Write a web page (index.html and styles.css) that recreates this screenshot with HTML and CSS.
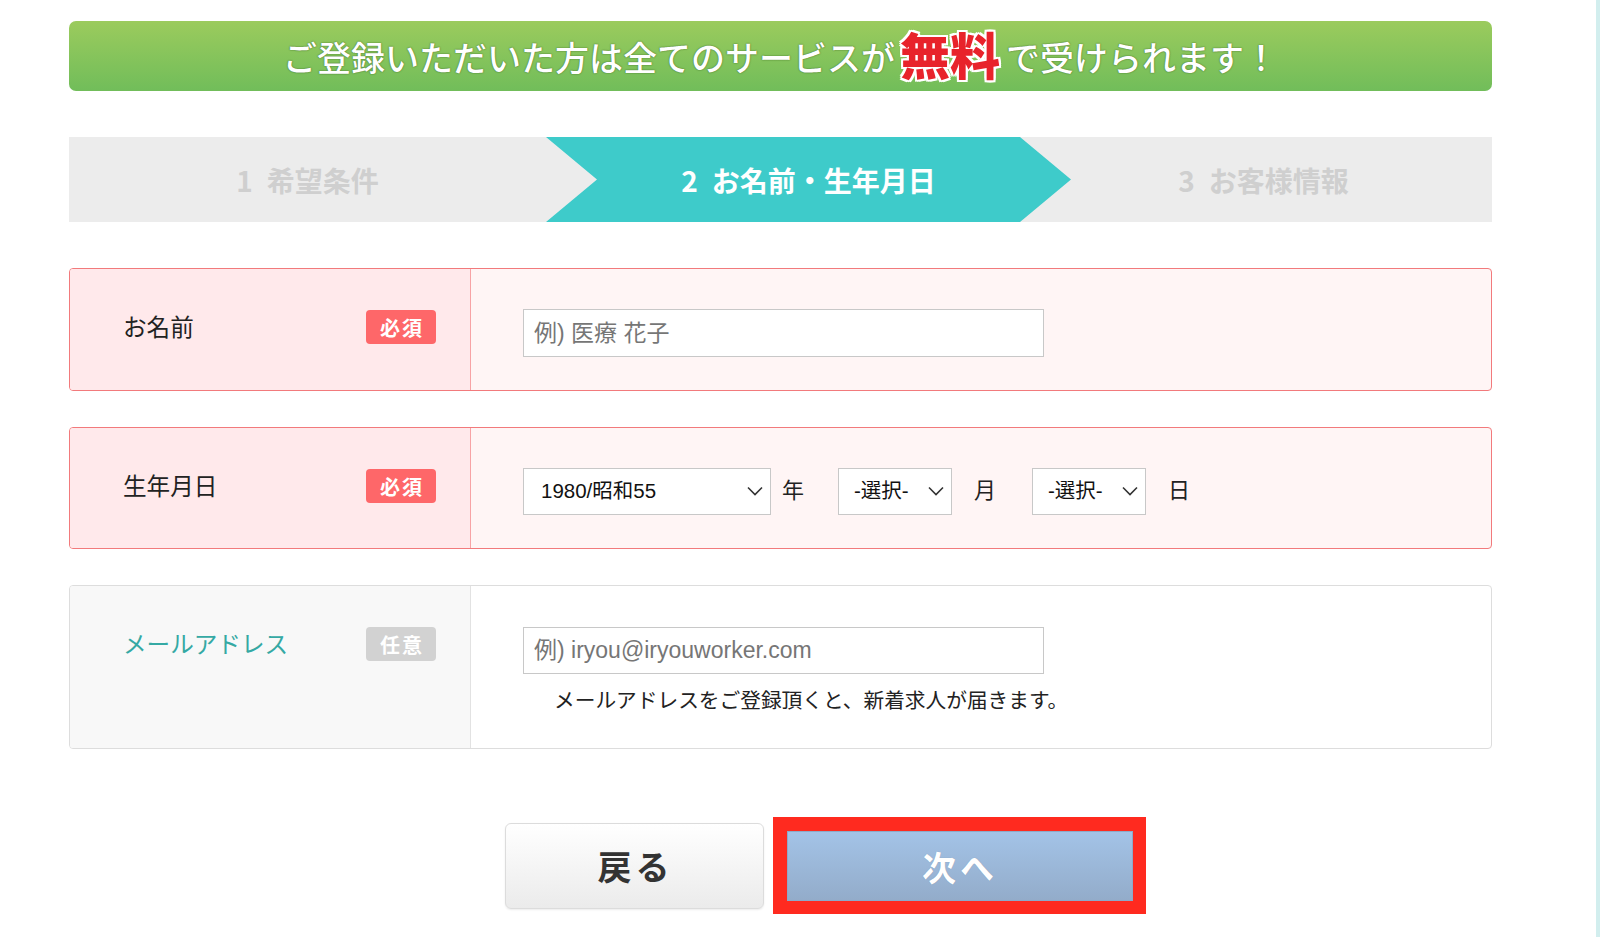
FILE: index.html
```html
<!DOCTYPE html>
<html lang="ja">
<head>
<meta charset="utf-8">
<title>登録フォーム</title>
<link rel="stylesheet" href="styles.css">
</head>
<body>
<div class="page">
  <div class="banner">ご登録いただいた方は全てのサービスが<span class="free">無料</span>で受けられます！</div>

  <div class="steps">
    <div class="step step-1"><span class="num">1</span>希望条件</div>
    <div class="step step-2"><span class="num">2</span>お名前・生年月日</div>
    <div class="step step-3"><span class="num">3</span>お客様情報</div>
  </div>

  <div class="row req row-name">
    <div class="label"><span class="lt">お名前</span><span class="badge">必須</span></div>
    <div class="field"><input class="text" type="text" placeholder="例) 医療 花子"></div>
  </div>

  <div class="row req row-birth">
    <div class="label"><span class="lt">生年月日</span><span class="badge">必須</span></div>
    <div class="field">
      <div class="selects">
        <span class="sel sel-year"><select><option>1980/昭和55</option></select><svg class="chev" viewBox="0 0 16 10"><path d="M1 1.5 L8 8.5 L15 1.5" fill="none" stroke="#333" stroke-width="1.6"/></svg></span>
        <span class="unit u-year">年</span>
        <span class="sel sel-small"><select><option>-選択-</option></select><svg class="chev" viewBox="0 0 16 10"><path d="M1 1.5 L8 8.5 L15 1.5" fill="none" stroke="#333" stroke-width="1.6"/></svg></span>
        <span class="unit u-month">月</span>
        <span class="sel sel-small sel-day"><select><option>-選択-</option></select><svg class="chev" viewBox="0 0 16 10"><path d="M1 1.5 L8 8.5 L15 1.5" fill="none" stroke="#333" stroke-width="1.6"/></svg></span>
        <span class="unit u-day">日</span>
      </div>
    </div>
  </div>

  <div class="row opt row-mail">
    <div class="label"><span class="lt">メールアドレス</span><span class="badge">任意</span></div>
    <div class="field">
      <input class="text" type="text" placeholder="例) iryou@iryouworker.com">
      <p class="note">メールアドレスをご登録頂くと、新着求人が届きます。</p>
    </div>
  </div>

  <div class="buttons">
    <button class="btn back">戻る</button>
    <div class="highlight"><button class="btn next">次へ</button></div>
  </div>
</div>
</body>
</html>
```

FILE: styles.css
```css
html, body {
  margin: 0;
  padding: 0;
  background: #fff;
}
body {
  width: 1600px;
  min-height: 937px;
  box-sizing: border-box;
  border-right: 4px solid #d2eeee;
  font-family: "Noto Sans CJK JP", "Liberation Sans", sans-serif;
  color: #222;
  overflow: hidden;
}
.page {
  margin-left: 69px;
  width: 1423px;
  padding-top: 21px;
}

/* banner */
.banner {
  height: 70px;
  border-radius: 7px;
  background: linear-gradient(#9bcb5d, #71bd5a);
  display: flex;
  align-items: center;
  justify-content: center;
  color: #fff;
  font-size: 34px;
  font-weight: 500;
  letter-spacing: 0;
  text-shadow: 0 0 1px rgba(40, 80, 20, .8), 0 0 2px rgba(40, 80, 20, .4);
  white-space: nowrap;
}
.banner .free {
  color: #e8232b;
  font-size: 50px;
  font-weight: 900;
  margin: -6px 6px 0 5px;
  text-shadow: 2px 0 0 #fff, -2px 0 0 #fff, 0 2px 0 #fff, 0 -2px 0 #fff,
    2px 2px 0 #fff, -2px -2px 0 #fff, 2px -2px 0 #fff, -2px 2px 0 #fff,
    0 0 3px rgba(0,0,0,.3);
}

/* steps */
.steps {
  margin-top: 46px;
  height: 85px;
  background: #ececec;
  display: grid;
  grid-template-columns: 477px 525px 1fr;
}
.step {
  display: flex;
  align-items: center;
  justify-content: center;
  font-size: 28px;
  font-weight: 700;
  color: #cfcfcf;
  white-space: nowrap;
}
.step .num { margin-right: 14px; }
.step-2 {
  background: #3ecbca;
  color: #fff;
  clip-path: polygon(0 0, 474px 0, 100% 50%, 474px 100%, 0 100%, 51px 50%);
}
.step-3 { padding-right: 36px; }

/* rows */
.row {
  display: flex;
  box-sizing: border-box;
  border: 1px solid;
  border-radius: 4px;
  overflow: hidden;
}
.row-name { margin-top: 46px; height: 123px; }
.row-birth { margin-top: 36px; height: 122px; }
.row-mail { margin-top: 36px; height: 164px; }
.req { border-color: #f27a7c; background: #fff5f5; }
.req .label { background: #ffe9eb; border-right: 1px solid #f7a3a5; }
.opt { border-color: #dddddd; background: #fff; }
.opt .label { background: #f8f8f8; border-right: 1px solid #e2e2e2; }

.label {
  width: 401px;
  box-sizing: border-box;
  padding: 41px 34px 0 53px;
  display: flex;
  justify-content: space-between;
  align-items: flex-start;
}
.lt {
  font-size: 23.6px;
  line-height: 32px;
  color: #222;
}
.opt .lt { color: #35a9a4; }
.badge {
  width: 70px;
  height: 34px;
  border-radius: 4px;
  display: flex;
  align-items: center;
  justify-content: center;
  color: #fff;
  font-size: 20px;
  font-weight: 700;
  letter-spacing: 2px;
  padding-left: 2px;
  box-sizing: border-box;
}
.req .badge { background: #fe6769; }
.opt .badge { background: #d2d2d2; }

.field {
  flex: 1;
  padding: 40px 0 0 52px;
}
.row-mail .field { padding-top: 41px; }
.text {
  display: block;
  width: 521px;
  height: 48px;
  box-sizing: border-box;
  border: 1px solid #c8c8c8;
  background: #fff;
  padding: 0 10px;
  font-family: "Liberation Sans", "Noto Sans CJK JP", sans-serif;
  font-size: 23px;
  color: #333;
  outline: none;
}
.row-mail .text { height: 47px; }
.text::placeholder { color: #767676; }

.note {
  margin: 10px 0 0 31px;
  font-size: 20.7px;
  line-height: 30px;
  color: #222;
}

/* selects */
.selects {
  display: flex;
  align-items: center;
}
.sel {
  position: relative;
  display: block;
  height: 47px;
}
.sel select {
  appearance: none;
  -webkit-appearance: none;
  width: 100%;
  height: 47px;
  box-sizing: border-box;
  border: 1px solid #c8c8c8;
  border-radius: 0;
  background: #fff;
  font-family: "Liberation Sans", "Noto Sans CJK JP", sans-serif;
  font-size: 20.5px;
  color: #111;
  padding: 0 0 2px 17px;
  outline: none;
}
.sel-year { width: 248px; }
.sel-small { width: 114px; }
.sel-small select { padding-left: 15px; }
.chev {
  position: absolute;
  right: 8px;
  top: 18px;
  width: 16px;
  height: 10px;
  pointer-events: none;
}
.unit {
  font-size: 22px;
  color: #222;
  line-height: 30px;
}
.u-year { margin: -7px 34px 0 11px; }
.u-month { margin: -7px 36px 0 22px; }
.u-day { margin: -7px 0 0 22px; }

/* buttons */
.buttons {
  margin-top: 68px;
  display: flex;
  align-items: center;
  padding-left: 436px;
}
.btn {
  font-family: "Noto Sans CJK JP", sans-serif;
  font-size: 34px;
  font-weight: 700;
  letter-spacing: 4px;
  cursor: pointer;
}
.back {
  width: 259px;
  height: 86px;
  border: 1px solid #dcdcdc;
  border-radius: 6px;
  background: linear-gradient(#ffffff, #ebebeb);
  color: #333;
  box-shadow: 0 1px 2px rgba(0,0,0,.08);
  padding-left: 8px;
}
.highlight {
  margin-left: 9px;
  border: 14px solid #ff2a1f;
  border-bottom-width: 13px;
  border-right-width: 13px;
}
.next {
  display: block;
  width: 346px;
  height: 70px;
  border: 1px solid #8ea9c8;
  background: linear-gradient(#a3c3e7, #93acca);
  color: #fff;
  text-shadow: 0 0 1px rgba(0,0,0,.2);
}
```
